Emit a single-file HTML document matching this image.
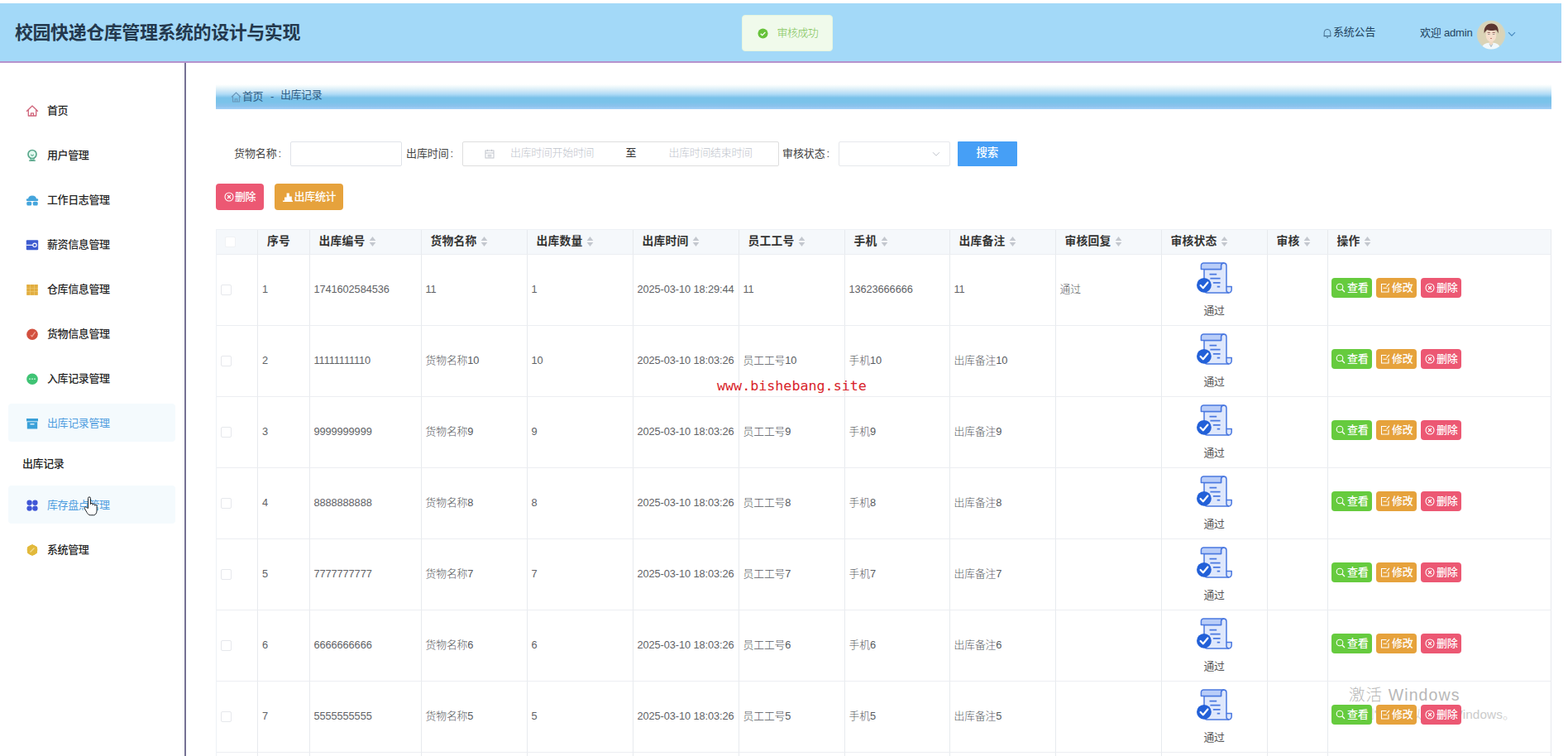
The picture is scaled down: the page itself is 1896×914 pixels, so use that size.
<!DOCTYPE html>
<html lang="zh-CN">
<head>
<meta charset="utf-8">
<title>校园快递仓库管理系统的设计与实现</title>
<style>
*{box-sizing:border-box;margin:0;padding:0}
html,body{width:1896px;height:914px;overflow:hidden;background:#fff}
body{font-family:"Liberation Sans","Noto Sans CJK SC",sans-serif;font-size:12px;color:#333;position:relative}
#hdr{position:absolute;left:0;top:4px;width:1888px;height:72px;background:#a3d9f8;border-bottom:2px solid #b592cd}
#title{position:absolute;left:18px;top:21px;font-size:22px;font-weight:700;color:#23384d;letter-spacing:-0.44px;line-height:30px;white-space:nowrap}
#toast{position:absolute;left:897px;top:14px;width:110px;height:44px;background:#f0faeb;border:1px solid #e6f6df;border-radius:4px}
#toast svg{position:absolute;left:17.500px;top:15px}
#toast span{position:absolute;left:41.500px;top:12px;font-size:13px;color:#7cc253;line-height:18px;letter-spacing:-0.6px;white-space:nowrap;font-weight:300}
.hd-t{position:absolute;font-size:13px;color:#22435f;line-height:18px;white-space:nowrap;letter-spacing:-0.2px}
#side{position:absolute;left:0;top:76px;width:225px;height:838px;border-right:2px solid #757194;background:#fff}
.mi{position:absolute;left:10px;width:202px;height:46px;border-radius:4px}
.mi.act{background:#f4fafd}
.mi svg{position:absolute;left:21px;top:15.500px;width:16px;height:16px}
.mi span{position:absolute;left:47px;top:14px;font-size:13px;font-weight:500;color:#262626;line-height:20px;white-space:nowrap;letter-spacing:-0.4px}
.mi.act span{color:#4f9ddf;font-weight:400}
#sub{position:absolute;left:27px;top:475px;font-size:13px;font-weight:500;color:#222;line-height:20px;letter-spacing:-0.4px;white-space:nowrap}
#bc{position:absolute;left:261px;top:102px;width:1615px;height:30px;background:linear-gradient(180deg,#ffffff 0%,#eef8fb 10%,#d3eaf7 24%,#aedaf6 40%,#7ac2ea 54%,#7ac3ea 72%,#8cc2ec 88%,#a3d1f8 100%)}
#bc span{position:absolute;top:6px;font-size:13px;color:#2f5e86;line-height:18px;white-space:nowrap;letter-spacing:-0.45px}
.lbl{position:absolute;top:177px;font-size:13px;color:#444;line-height:18px;white-space:nowrap;letter-spacing:-0.1px}
.lbl i{font-style:normal;margin-left:2px}
.inp{position:absolute;top:171px;height:30px;border:1px solid #e0e3e9;background:#fff;border-radius:2px}
.ph{position:absolute;top:4px;font-size:13px;color:#c0c4cc;line-height:18px;white-space:nowrap;letter-spacing:-0.35px;font-weight:300}
.btn{position:absolute;border-radius:4px;color:#fff;font-size:12.5px;line-height:18px;white-space:nowrap}
.btn span{position:absolute;white-space:nowrap;font-weight:500}
.btn svg{position:absolute}
#tbl{position:absolute;left:261px;top:277px;width:1614px;border-collapse:separate;border-spacing:0;table-layout:fixed;border-top:1px solid #eef1f6;border-left:1px solid #eef1f6}
#tbl th,#tbl td{border-right:1px solid #e7eaee;border-bottom:1px solid #eceef2;text-align:left;vertical-align:middle;overflow:hidden;white-space:nowrap;position:relative}
#tbl th{height:30px;background:#f5f8fb;font-size:13.8px;font-weight:700;color:#333;padding:0 0 6px 11px;letter-spacing:0.2px}
#tbl td{height:86px;font-size:12.8px;color:#606266;padding:0 0 2px 5px;letter-spacing:-0.1px;font-weight:300}
#tbl td.c{padding-bottom:4px;color:#565a60}
.cb{display:block;width:13px;height:13px;border:1px solid #e6e8ec;border-radius:2px;background:#fff;position:relative}
.srt{display:inline-block;vertical-align:middle;margin-left:4px;margin-top:0px}
.st{position:absolute;left:0;top:0;width:100%;height:100%}
.st svg{position:absolute;left:42.6px;top:9px}
.st span{position:absolute;left:0;width:100%;text-align:center;top:59px;font-size:12.8px;line-height:18px;color:#555;font-weight:400;letter-spacing:-0.3px}
.ob{position:absolute;top:28px;height:24px;border-radius:4px;color:#fff;font-size:13px;font-weight:500}
.ob svg{position:absolute;left:5px;top:6px}
.ob span{position:absolute;left:19.500px;top:3px;line-height:18px;letter-spacing:-0.2px}
#wm{position:absolute;left:867px;top:455px;font-family:"DejaVu Sans Mono","Liberation Mono",monospace;font-size:16.700px;color:#d8242a;line-height:22px;white-space:nowrap;letter-spacing:0}
#aw1{position:absolute;left:1631px;top:827px;font-size:19.500px;letter-spacing:1.100px;color:#b8b8b8;line-height:26px;white-space:nowrap;font-family:"Liberation Sans","Noto Sans CJK SC",sans-serif;font-weight:300}
#aw2{position:absolute;left:1631px;top:854px;font-size:15.300px;letter-spacing:0.1px;color:#cbcbcb;line-height:20px;white-space:nowrap;font-weight:300}
</style>
</head>
<body>
<div id="hdr">
<div id="title">校园快递仓库管理系统的设计与实现</div>
<div id="toast"><svg width="13" height="13" viewBox="0 0 14 14"><circle cx="7" cy="7" r="6.500" fill="#67c23a"/><path d="M4 7.200l2.200 2.100 3.900-4.100" stroke="#fff" stroke-width="1.400" fill="none"/></svg><span>审核成功</span></div>
<svg style="position:absolute;left:1599.500px;top:29.500px" width="10" height="12" viewBox="0 0 10 12"><path d="M1.200 9.500V5.200a3.800 3.800 0 0 1 7.600 0v4.300z" fill="none" stroke="#3d6485" stroke-width="0.900"/><path d="M0.500 9.700h9M4 11.300h2" stroke="#3d6485" stroke-width="0.900"/></svg>
<div class="hd-t" style="left:1612px;top:26px">系统公告</div>
<div class="hd-t" style="left:1717px;top:27px">欢迎 admin</div>
<svg style="position:absolute;left:1785px;top:19.500px" width="36" height="36" viewBox="0 0 36 36">
<defs><clipPath id="av"><circle cx="18" cy="18" r="17.500"/></clipPath><radialGradient id="avg" cx="50%" cy="50%" r="50%"><stop offset="0.82" stop-color="#dbd3b6"/><stop offset="1" stop-color="#cfd6c4"/></radialGradient></defs>
<circle cx="18" cy="18" r="17.300" fill="url(#avg)"/>
<g clip-path="url(#av)">
<path d="M6 38c0-7 4-10.500 12-10.500s11.500 3.500 11.500 10.500z" fill="#f1f8fb"/>
<path d="M15.800 25.500h4.400v3.800l-2.200 2-2.200-2z" fill="#f0d9c3"/>
<path d="M16.300 29.500l1.700 3 1.700-3" fill="none" stroke="#9fb4bf" stroke-width="0.900"/>
<ellipse cx="18" cy="18.500" rx="6.300" ry="8" fill="#f6dfcd"/>
<path d="M9.800 16.500c-1.200-7.500 3.200-12 8.600-12s9.500 4 8.100 12c-.6-2-1.300-3.300-2.400-4.200-3 1.200-8.200 1-10.900-.2-1.600 1.200-2.600 2.400-3.400 4.400z" fill="#5b3530"/>
<path d="M13.600 15.300h3.200M19.600 15.300h3.200" stroke="#6b3a35" stroke-width="0.800"/>
<path d="M14 17.500h2.600M19.800 17.500h2.600" stroke="#8a8580" stroke-width="0.800"/>
<path d="M17 22.300q1 .7 2 0" fill="none" stroke="#b5645a" stroke-width="0.800"/>
</g></svg>
<svg style="position:absolute;left:1823px;top:34px" width="10" height="7" viewBox="0 0 10 7"><path d="M1 1.200l4 4 4-4" fill="none" stroke="#4587bd" stroke-width="1.100"/></svg>
</div>
<div id="side">
<div class="mi" style="top:34px"><svg viewBox="0 0 16 16"><path d="M1.5 8.2L8 2l6.5 6.2M3.3 7v7h9.4V7M6.5 14v-3.2h3V14" fill="none" stroke="#cf6379" stroke-width="1.300" stroke-linejoin="round" stroke-linecap="round"/></svg><span>首页</span></div>
<div class="mi" style="top:88px"><svg viewBox="0 0 16 16"><path d="M5.600 10.800L6.200 13.600H9.800L10.400 10.800z" fill="#b5f0d8" stroke="#5aa88c" stroke-width="1"/><circle cx="8" cy="6.500" r="5" fill="#e2faf0" stroke="#5aa88c" stroke-width="1.700"/><path d="M4.200 14.200h7.600" stroke="#5aa88c" stroke-width="1.500"/><path d="M6.200 6.800l1.800 1.500 1.800-1.500" fill="none" stroke="#5aa88c" stroke-width="1.100"/></svg><span>用户管理</span></div>
<div class="mi" style="top:142px"><svg viewBox="0 0 16 16"><path d="M3 7Q3 2.400 8 2.400T13 7z" fill="#45a5dc"/><rect x="0.800" y="6.300" width="14.400" height="2.600" rx="1.200" fill="#45a5dc"/><rect x="1.300" y="9.700" width="5.900" height="4.800" rx="1.600" fill="#45a5dc"/><rect x="8.800" y="9.700" width="5.900" height="4.800" rx="1.600" fill="#45a5dc"/></svg><span>工作日志管理</span></div>
<div class="mi" style="top:196px"><svg viewBox="0 0 16 16"><rect x="0.8" y="2.2" width="14.4" height="12" rx="1" fill="#3d5bd0"/><path d="M1 8.3h8" stroke="#fff" stroke-width="1.1"/><circle cx="11" cy="8.3" r="2.2" fill="none" stroke="#fff" stroke-width="1.1"/></svg><span>薪资信息管理</span></div>
<div class="mi" style="top:250px"><svg viewBox="0 0 16 16"><rect x="1.300" y="2" width="13.400" height="12.800" fill="#f3d78c"/><g fill="#e2ad3f"><rect x="1.300" y="2.000" width="4.200" height="4"/><rect x="5.900" y="2.000" width="4.200" height="4"/><rect x="10.500" y="2.000" width="4.200" height="4"/><rect x="1.300" y="6.400" width="4.200" height="4"/><rect x="5.900" y="6.400" width="4.200" height="4"/><rect x="10.500" y="6.400" width="4.200" height="4"/><rect x="1.300" y="10.800" width="4.200" height="4"/><rect x="5.900" y="10.800" width="4.200" height="4"/><rect x="10.500" y="10.800" width="4.200" height="4"/></g></svg><span>仓库信息管理</span></div>
<div class="mi" style="top:304px"><svg viewBox="0 0 16 16"><circle cx="8" cy="8.200" r="6.800" fill="#d2503f"/><path d="M6.200 9.200l1.600 1.500 3.800-5.400" fill="none" stroke="#f1a597" stroke-width="1.300"/></svg><span>货物信息管理</span></div>
<div class="mi" style="top:358px"><svg viewBox="0 0 16 16"><circle cx="8" cy="8.2" r="6.8" fill="#3fc374"/><circle cx="5" cy="8.2" r="0.9" fill="#c9f2d9"/><circle cx="8" cy="8.2" r="0.9" fill="#c9f2d9"/><circle cx="11" cy="8.2" r="0.9" fill="#c9f2d9"/></svg><span>入库记录管理</span></div>
<div class="mi act" style="top:412px"><svg viewBox="0 0 16 16"><rect x="1" y="2" width="14" height="3.4" fill="#3aa0d8"/><rect x="1.8" y="6.2" width="12.4" height="8.3" fill="#3aa0d8"/><rect x="5.5" y="8" width="5" height="1.5" fill="#d8eefa"/></svg><span>出库记录管理</span></div>
<div class="mi act" style="top:511px"><svg viewBox="0 0 16 16"><g fill="#3f56d6"><circle cx="4.6" cy="4.8" r="3.2"/><circle cx="11.4" cy="4.8" r="3.2"/><circle cx="4.6" cy="11.6" r="3.2"/><circle cx="11.4" cy="11.6" r="3.2"/></g></svg><span>库存盘点管理</span></div>
<div class="mi" style="top:565px"><svg viewBox="0 0 16 16"><path d="M8 1l6 3.4v7.2L8 15l-6-3.4V4.400z" fill="#e2b93b"/><circle cx="8" cy="8" r="6.3" fill="#e2b93b"/><path d="M5.5 10.500l5-5" stroke="#f4dc8e" stroke-width="1.2"/></svg><span>系统管理</span></div>
<div id="sub">出库记录</div>
<svg style="position:absolute;left:101px;top:524px" width="18" height="24" viewBox="0 0 18 24"><path d="M5.500 14.500V2.400a1.500 1.500 0 0 1 3 0V9.600a1.300 1.300 0 0 1 2.600 0.200V10.400a1.300 1.300 0 0 1 2.600 0.300V11.300a1.200 1.200 0 0 1 2.400 0.300V17c0 3-1.500 5.800-3.600 5.800H8.200c-2 0-3.200-1.600-4.200-3.400L1.200 14.600c-0.700-1.300 1.200-2.400 2.100-1.200Z" fill="#fdfefe" stroke="#20262b" stroke-width="1" stroke-linejoin="round"/></svg>
</div>
<div id="bc"><svg style="position:absolute;left:18px;top:9px" width="13" height="13" viewBox="0 0 12 12"><path d="M0.800 6L6 1l5.200 5M2.300 5v6h7.400V5M4.800 11V8h2.400v3" fill="none" stroke="#6a97ba" stroke-width="1"/></svg><span style="left:32px">首页</span><span style="left:66px">-</span><span style="left:78px;top:4px">出库记录</span></div>
<div class="lbl" style="left:283px">货物名称<i>:</i></div>
<div class="inp" style="left:351px;width:135px"></div>
<div class="lbl" style="left:491px">出库时间<i>:</i></div>
<div class="inp" style="left:559px;width:383px;top:171px;height:30px;border-color:#dedede"><svg style="position:absolute;left:26px;top:8px" width="12" height="12" viewBox="0 0 12 12"><rect x="1" y="2" width="10" height="9" fill="none" stroke="#c0c4cc" stroke-width="1"/><path d="M1 5h10M3.500 7.500h5M3.500 9.200h5M3.500 0.800v2M8.500 0.800v2" stroke="#c0c4cc" stroke-width="1"/></svg><span class="ph" style="left:57px">出库时间开始时间</span><span class="ph" style="left:196.500px;color:#333;font-weight:400">至</span><span class="ph" style="left:248.500px">出库时间结束时间</span></div>
<div class="lbl" style="left:946px">审核状态<i>:</i></div>
<div class="inp" style="left:1014px;width:135px;border-color:#e6e8ec"><svg style="position:absolute;left:112px;top:11px" width="10" height="7" viewBox="0 0 10 7"><path d="M1 1.200l4 4 4-4" fill="none" stroke="#c0c4cc" stroke-width="1"/></svg></div>
<div class="btn" style="left:1158px;top:171px;width:72px;height:30px;background:#469ff6;border-radius:1px"><span style="left:22.500px;top:5px;font-size:13.500px;letter-spacing:-0.3px">搜索</span></div>
<div class="btn" style="left:261px;top:222px;width:58px;height:32px;background:#ec5873"><svg style="left:10px;top:10px" width="12" height="12" viewBox="0 0 12 12"><circle cx="6" cy="6" r="5" fill="none" stroke="#fff" stroke-width="1.100"/><path d="M4 4l4 4M8 4l-4 4" stroke="#fff" stroke-width="1.100"/></svg><span style="left:23px;top:7px;font-size:13px;letter-spacing:-0.4px">删除</span></div>
<div class="btn" style="left:332px;top:222px;width:83px;height:32px;background:#e6a23c"><svg style="left:10px;top:10px" width="12" height="12" viewBox="0 0 12 12"><path d="M0 12h12v-1.600h-1.200V5.500H7.800V1.500H4.600V6.500H2V10.400H0z" fill="#fff"/></svg><span style="left:23.500px;top:7px;font-size:13px;letter-spacing:-0.3px">出库统计</span></div>
<div id="aw2">转到"设置"以激活 Windows。</div>
<table id="tbl"><colgroup><col style="width:50px"><col style="width:62.5px"><col style="width:135px"><col style="width:128px"><col style="width:128px"><col style="width:128px"><col style="width:128px"><col style="width:127px"><col style="width:128px"><col style="width:128px"><col style="width:128px"><col style="width:73px"><col style="width:270px"></colgroup>
<thead><tr><th style="padding-left:10px"><i class="cb" style="top:2.500px;border-color:#f0f2f5"></i></th><th>序号</th><th>出库编号<svg class="srt" width="9" height="14" viewBox="0 0 9 14"><path d="M4.500 1L8.300 6H0.700z" fill="#c3c7ce"/><path d="M4.500 13L8.300 8H0.700z" fill="#c3c7ce"/></svg></th><th>货物名称<svg class="srt" width="9" height="14" viewBox="0 0 9 14"><path d="M4.500 1L8.300 6H0.700z" fill="#c3c7ce"/><path d="M4.500 13L8.300 8H0.700z" fill="#c3c7ce"/></svg></th><th>出库数量<svg class="srt" width="9" height="14" viewBox="0 0 9 14"><path d="M4.500 1L8.300 6H0.700z" fill="#c3c7ce"/><path d="M4.500 13L8.300 8H0.700z" fill="#c3c7ce"/></svg></th><th>出库时间<svg class="srt" width="9" height="14" viewBox="0 0 9 14"><path d="M4.500 1L8.300 6H0.700z" fill="#c3c7ce"/><path d="M4.500 13L8.300 8H0.700z" fill="#c3c7ce"/></svg></th><th>员工工号<svg class="srt" width="9" height="14" viewBox="0 0 9 14"><path d="M4.500 1L8.300 6H0.700z" fill="#c3c7ce"/><path d="M4.500 13L8.300 8H0.700z" fill="#c3c7ce"/></svg></th><th>手机<svg class="srt" width="9" height="14" viewBox="0 0 9 14"><path d="M4.500 1L8.300 6H0.700z" fill="#c3c7ce"/><path d="M4.500 13L8.300 8H0.700z" fill="#c3c7ce"/></svg></th><th>出库备注<svg class="srt" width="9" height="14" viewBox="0 0 9 14"><path d="M4.500 1L8.300 6H0.700z" fill="#c3c7ce"/><path d="M4.500 13L8.300 8H0.700z" fill="#c3c7ce"/></svg></th><th>审核回复<svg class="srt" width="9" height="14" viewBox="0 0 9 14"><path d="M4.500 1L8.300 6H0.700z" fill="#c3c7ce"/><path d="M4.500 13L8.300 8H0.700z" fill="#c3c7ce"/></svg></th><th>审核状态<svg class="srt" width="9" height="14" viewBox="0 0 9 14"><path d="M4.500 1L8.300 6H0.700z" fill="#c3c7ce"/><path d="M4.500 13L8.300 8H0.700z" fill="#c3c7ce"/></svg></th><th>审核<svg class="srt" width="9" height="14" viewBox="0 0 9 14"><path d="M4.500 1L8.300 6H0.700z" fill="#c3c7ce"/><path d="M4.500 13L8.300 8H0.700z" fill="#c3c7ce"/></svg></th><th>操作<svg class="srt" width="9" height="14" viewBox="0 0 9 14"><path d="M4.500 1L8.300 6H0.700z" fill="#c3c7ce"/><path d="M4.500 13L8.300 8H0.700z" fill="#c3c7ce"/></svg></th></tr></thead>
<tbody>
<tr><td style="padding-left:5px"><i class="cb" style="top:1px"></i></td><td>1</td><td>1741602584536</td><td>11</td><td>1</td><td>2025-03-10 18:29:44</td><td>11</td><td>13623666666</td><td>11</td><td class="c">通过</td><td><div class="st"><svg width="44" height="41" viewBox="0 0 44 41">
<path d="M9 8.600H29.500V4.200A3.300 3.300 0 0 1 32.800 0.900A3.300 3.300 0 0 1 36 4.200V29.600H42.200V33.300A3.700 3.700 0 0 1 38.500 37H12.500A3.500 3.500 0 0 1 9 33.500Z" fill="#dfe8fc" stroke="#4a78e0" stroke-width="1.500" stroke-linejoin="round"/>
<path d="M8.400 0.900H32.800A3.300 3.300 0 0 0 29.500 4.200V8.600H5.400V3.900A3 3 0 0 1 8.400 0.900Z" fill="#b9cdf8" stroke="#4a78e0" stroke-width="1.500" stroke-linejoin="round"/>
<path d="M36 29.600V33.200A3.400 3.400 0 0 0 39 36.900" fill="none" stroke="#4a78e0" stroke-width="1.500"/>
<path d="M15.500 14.700H24.200M16.400 19.600H28.600M19.900 24.800H28.600M24.700 29.700H28.200" stroke="#4a78e0" stroke-width="1.700"/>
<circle cx="8.900" cy="27.800" r="8.900" fill="#2260d8"/>
<path d="M4.600 28l3.200 3.300 5.600-6.800" fill="none" stroke="#fff" stroke-width="2.200" stroke-linecap="round" stroke-linejoin="round"/>
</svg><span>通过</span></div></td><td></td><td><div class="ob" style="left:4px;width:49px;background:#66cb3e"><svg width="12" height="12" viewBox="0 0 12 12"><circle cx="5" cy="5" r="3.800" fill="none" stroke="#fff" stroke-width="1.100"/><path d="M7.800 7.800L11 11" stroke="#fff" stroke-width="1.300"/></svg><span>查看</span></div><div class="ob" style="left:58px;width:49px;background:#e6a23c"><svg width="12" height="12" viewBox="0 0 12 12"><path d="M7.500 1.500H1.500v9.500h8.500V5.500" fill="none" stroke="#fff" stroke-width="1.100"/><path d="M3.500 6.300h4.500M11 1L7.600 4.600" fill="none" stroke="#fff" stroke-width="1.100"/></svg><span>修改</span></div><div class="ob" style="left:112px;width:49px;background:#ec5873"><svg width="12" height="12" viewBox="0 0 12 12"><circle cx="6" cy="6" r="5" fill="none" stroke="#fff" stroke-width="1.100"/><path d="M4 4l4 4M8 4l-4 4" stroke="#fff" stroke-width="1.100"/></svg><span>删除</span></div></td></tr>
<tr><td style="padding-left:5px"><i class="cb" style="top:1px"></i></td><td>2</td><td>11111111110</td><td class="c">货物名称10</td><td>10</td><td>2025-03-10 18:03:26</td><td class="c">员工工号10</td><td class="c">手机10</td><td class="c">出库备注10</td><td></td><td><div class="st"><svg width="44" height="41" viewBox="0 0 44 41">
<path d="M9 8.600H29.500V4.200A3.300 3.300 0 0 1 32.800 0.900A3.300 3.300 0 0 1 36 4.200V29.600H42.200V33.300A3.700 3.700 0 0 1 38.500 37H12.500A3.500 3.500 0 0 1 9 33.500Z" fill="#dfe8fc" stroke="#4a78e0" stroke-width="1.500" stroke-linejoin="round"/>
<path d="M8.400 0.900H32.800A3.300 3.300 0 0 0 29.500 4.200V8.600H5.400V3.900A3 3 0 0 1 8.400 0.900Z" fill="#b9cdf8" stroke="#4a78e0" stroke-width="1.500" stroke-linejoin="round"/>
<path d="M36 29.600V33.200A3.400 3.400 0 0 0 39 36.900" fill="none" stroke="#4a78e0" stroke-width="1.500"/>
<path d="M15.500 14.700H24.200M16.400 19.600H28.600M19.900 24.800H28.600M24.700 29.700H28.200" stroke="#4a78e0" stroke-width="1.700"/>
<circle cx="8.900" cy="27.800" r="8.900" fill="#2260d8"/>
<path d="M4.600 28l3.200 3.300 5.600-6.800" fill="none" stroke="#fff" stroke-width="2.200" stroke-linecap="round" stroke-linejoin="round"/>
</svg><span>通过</span></div></td><td></td><td><div class="ob" style="left:4px;width:49px;background:#66cb3e"><svg width="12" height="12" viewBox="0 0 12 12"><circle cx="5" cy="5" r="3.800" fill="none" stroke="#fff" stroke-width="1.100"/><path d="M7.800 7.800L11 11" stroke="#fff" stroke-width="1.300"/></svg><span>查看</span></div><div class="ob" style="left:58px;width:49px;background:#e6a23c"><svg width="12" height="12" viewBox="0 0 12 12"><path d="M7.500 1.500H1.500v9.500h8.500V5.500" fill="none" stroke="#fff" stroke-width="1.100"/><path d="M3.500 6.300h4.500M11 1L7.600 4.600" fill="none" stroke="#fff" stroke-width="1.100"/></svg><span>修改</span></div><div class="ob" style="left:112px;width:49px;background:#ec5873"><svg width="12" height="12" viewBox="0 0 12 12"><circle cx="6" cy="6" r="5" fill="none" stroke="#fff" stroke-width="1.100"/><path d="M4 4l4 4M8 4l-4 4" stroke="#fff" stroke-width="1.100"/></svg><span>删除</span></div></td></tr>
<tr><td style="padding-left:5px"><i class="cb" style="top:1px"></i></td><td>3</td><td>9999999999</td><td class="c">货物名称9</td><td>9</td><td>2025-03-10 18:03:26</td><td class="c">员工工号9</td><td class="c">手机9</td><td class="c">出库备注9</td><td></td><td><div class="st"><svg width="44" height="41" viewBox="0 0 44 41">
<path d="M9 8.600H29.500V4.200A3.300 3.300 0 0 1 32.800 0.900A3.300 3.300 0 0 1 36 4.200V29.600H42.200V33.300A3.700 3.700 0 0 1 38.500 37H12.500A3.500 3.500 0 0 1 9 33.500Z" fill="#dfe8fc" stroke="#4a78e0" stroke-width="1.500" stroke-linejoin="round"/>
<path d="M8.400 0.900H32.800A3.300 3.300 0 0 0 29.500 4.200V8.600H5.400V3.900A3 3 0 0 1 8.400 0.900Z" fill="#b9cdf8" stroke="#4a78e0" stroke-width="1.500" stroke-linejoin="round"/>
<path d="M36 29.600V33.200A3.400 3.400 0 0 0 39 36.900" fill="none" stroke="#4a78e0" stroke-width="1.500"/>
<path d="M15.500 14.700H24.200M16.400 19.600H28.600M19.900 24.800H28.600M24.700 29.700H28.200" stroke="#4a78e0" stroke-width="1.700"/>
<circle cx="8.900" cy="27.800" r="8.900" fill="#2260d8"/>
<path d="M4.600 28l3.200 3.300 5.600-6.800" fill="none" stroke="#fff" stroke-width="2.200" stroke-linecap="round" stroke-linejoin="round"/>
</svg><span>通过</span></div></td><td></td><td><div class="ob" style="left:4px;width:49px;background:#66cb3e"><svg width="12" height="12" viewBox="0 0 12 12"><circle cx="5" cy="5" r="3.800" fill="none" stroke="#fff" stroke-width="1.100"/><path d="M7.800 7.800L11 11" stroke="#fff" stroke-width="1.300"/></svg><span>查看</span></div><div class="ob" style="left:58px;width:49px;background:#e6a23c"><svg width="12" height="12" viewBox="0 0 12 12"><path d="M7.500 1.500H1.500v9.500h8.500V5.500" fill="none" stroke="#fff" stroke-width="1.100"/><path d="M3.500 6.300h4.500M11 1L7.600 4.600" fill="none" stroke="#fff" stroke-width="1.100"/></svg><span>修改</span></div><div class="ob" style="left:112px;width:49px;background:#ec5873"><svg width="12" height="12" viewBox="0 0 12 12"><circle cx="6" cy="6" r="5" fill="none" stroke="#fff" stroke-width="1.100"/><path d="M4 4l4 4M8 4l-4 4" stroke="#fff" stroke-width="1.100"/></svg><span>删除</span></div></td></tr>
<tr><td style="padding-left:5px"><i class="cb" style="top:1px"></i></td><td>4</td><td>8888888888</td><td class="c">货物名称8</td><td>8</td><td>2025-03-10 18:03:26</td><td class="c">员工工号8</td><td class="c">手机8</td><td class="c">出库备注8</td><td></td><td><div class="st"><svg width="44" height="41" viewBox="0 0 44 41">
<path d="M9 8.600H29.500V4.200A3.300 3.300 0 0 1 32.800 0.900A3.300 3.300 0 0 1 36 4.200V29.600H42.200V33.300A3.700 3.700 0 0 1 38.500 37H12.500A3.500 3.500 0 0 1 9 33.500Z" fill="#dfe8fc" stroke="#4a78e0" stroke-width="1.500" stroke-linejoin="round"/>
<path d="M8.400 0.900H32.800A3.300 3.300 0 0 0 29.500 4.200V8.600H5.400V3.900A3 3 0 0 1 8.400 0.900Z" fill="#b9cdf8" stroke="#4a78e0" stroke-width="1.500" stroke-linejoin="round"/>
<path d="M36 29.600V33.200A3.400 3.400 0 0 0 39 36.900" fill="none" stroke="#4a78e0" stroke-width="1.500"/>
<path d="M15.500 14.700H24.200M16.400 19.600H28.600M19.900 24.800H28.600M24.700 29.700H28.200" stroke="#4a78e0" stroke-width="1.700"/>
<circle cx="8.900" cy="27.800" r="8.900" fill="#2260d8"/>
<path d="M4.600 28l3.200 3.300 5.600-6.800" fill="none" stroke="#fff" stroke-width="2.200" stroke-linecap="round" stroke-linejoin="round"/>
</svg><span>通过</span></div></td><td></td><td><div class="ob" style="left:4px;width:49px;background:#66cb3e"><svg width="12" height="12" viewBox="0 0 12 12"><circle cx="5" cy="5" r="3.800" fill="none" stroke="#fff" stroke-width="1.100"/><path d="M7.800 7.800L11 11" stroke="#fff" stroke-width="1.300"/></svg><span>查看</span></div><div class="ob" style="left:58px;width:49px;background:#e6a23c"><svg width="12" height="12" viewBox="0 0 12 12"><path d="M7.500 1.500H1.500v9.500h8.500V5.500" fill="none" stroke="#fff" stroke-width="1.100"/><path d="M3.500 6.300h4.500M11 1L7.600 4.600" fill="none" stroke="#fff" stroke-width="1.100"/></svg><span>修改</span></div><div class="ob" style="left:112px;width:49px;background:#ec5873"><svg width="12" height="12" viewBox="0 0 12 12"><circle cx="6" cy="6" r="5" fill="none" stroke="#fff" stroke-width="1.100"/><path d="M4 4l4 4M8 4l-4 4" stroke="#fff" stroke-width="1.100"/></svg><span>删除</span></div></td></tr>
<tr><td style="padding-left:5px"><i class="cb" style="top:1px"></i></td><td>5</td><td>7777777777</td><td class="c">货物名称7</td><td>7</td><td>2025-03-10 18:03:26</td><td class="c">员工工号7</td><td class="c">手机7</td><td class="c">出库备注7</td><td></td><td><div class="st"><svg width="44" height="41" viewBox="0 0 44 41">
<path d="M9 8.600H29.500V4.200A3.300 3.300 0 0 1 32.800 0.900A3.300 3.300 0 0 1 36 4.200V29.600H42.200V33.300A3.700 3.700 0 0 1 38.500 37H12.500A3.500 3.500 0 0 1 9 33.500Z" fill="#dfe8fc" stroke="#4a78e0" stroke-width="1.500" stroke-linejoin="round"/>
<path d="M8.400 0.900H32.800A3.300 3.300 0 0 0 29.500 4.200V8.600H5.400V3.900A3 3 0 0 1 8.400 0.900Z" fill="#b9cdf8" stroke="#4a78e0" stroke-width="1.500" stroke-linejoin="round"/>
<path d="M36 29.600V33.200A3.400 3.400 0 0 0 39 36.900" fill="none" stroke="#4a78e0" stroke-width="1.500"/>
<path d="M15.500 14.700H24.200M16.400 19.600H28.600M19.900 24.800H28.600M24.700 29.700H28.200" stroke="#4a78e0" stroke-width="1.700"/>
<circle cx="8.900" cy="27.800" r="8.900" fill="#2260d8"/>
<path d="M4.600 28l3.200 3.300 5.600-6.800" fill="none" stroke="#fff" stroke-width="2.200" stroke-linecap="round" stroke-linejoin="round"/>
</svg><span>通过</span></div></td><td></td><td><div class="ob" style="left:4px;width:49px;background:#66cb3e"><svg width="12" height="12" viewBox="0 0 12 12"><circle cx="5" cy="5" r="3.800" fill="none" stroke="#fff" stroke-width="1.100"/><path d="M7.800 7.800L11 11" stroke="#fff" stroke-width="1.300"/></svg><span>查看</span></div><div class="ob" style="left:58px;width:49px;background:#e6a23c"><svg width="12" height="12" viewBox="0 0 12 12"><path d="M7.500 1.500H1.500v9.500h8.500V5.500" fill="none" stroke="#fff" stroke-width="1.100"/><path d="M3.500 6.300h4.500M11 1L7.600 4.600" fill="none" stroke="#fff" stroke-width="1.100"/></svg><span>修改</span></div><div class="ob" style="left:112px;width:49px;background:#ec5873"><svg width="12" height="12" viewBox="0 0 12 12"><circle cx="6" cy="6" r="5" fill="none" stroke="#fff" stroke-width="1.100"/><path d="M4 4l4 4M8 4l-4 4" stroke="#fff" stroke-width="1.100"/></svg><span>删除</span></div></td></tr>
<tr><td style="padding-left:5px"><i class="cb" style="top:1px"></i></td><td>6</td><td>6666666666</td><td class="c">货物名称6</td><td>6</td><td>2025-03-10 18:03:26</td><td class="c">员工工号6</td><td class="c">手机6</td><td class="c">出库备注6</td><td></td><td><div class="st"><svg width="44" height="41" viewBox="0 0 44 41">
<path d="M9 8.600H29.500V4.200A3.300 3.300 0 0 1 32.800 0.900A3.300 3.300 0 0 1 36 4.200V29.600H42.200V33.300A3.700 3.700 0 0 1 38.500 37H12.500A3.500 3.500 0 0 1 9 33.500Z" fill="#dfe8fc" stroke="#4a78e0" stroke-width="1.500" stroke-linejoin="round"/>
<path d="M8.400 0.900H32.800A3.300 3.300 0 0 0 29.500 4.200V8.600H5.400V3.900A3 3 0 0 1 8.400 0.900Z" fill="#b9cdf8" stroke="#4a78e0" stroke-width="1.500" stroke-linejoin="round"/>
<path d="M36 29.600V33.200A3.400 3.400 0 0 0 39 36.900" fill="none" stroke="#4a78e0" stroke-width="1.500"/>
<path d="M15.500 14.700H24.200M16.400 19.600H28.600M19.900 24.800H28.600M24.700 29.700H28.200" stroke="#4a78e0" stroke-width="1.700"/>
<circle cx="8.900" cy="27.800" r="8.900" fill="#2260d8"/>
<path d="M4.600 28l3.200 3.300 5.600-6.800" fill="none" stroke="#fff" stroke-width="2.200" stroke-linecap="round" stroke-linejoin="round"/>
</svg><span>通过</span></div></td><td></td><td><div class="ob" style="left:4px;width:49px;background:#66cb3e"><svg width="12" height="12" viewBox="0 0 12 12"><circle cx="5" cy="5" r="3.800" fill="none" stroke="#fff" stroke-width="1.100"/><path d="M7.800 7.800L11 11" stroke="#fff" stroke-width="1.300"/></svg><span>查看</span></div><div class="ob" style="left:58px;width:49px;background:#e6a23c"><svg width="12" height="12" viewBox="0 0 12 12"><path d="M7.500 1.500H1.500v9.500h8.500V5.500" fill="none" stroke="#fff" stroke-width="1.100"/><path d="M3.500 6.300h4.500M11 1L7.600 4.600" fill="none" stroke="#fff" stroke-width="1.100"/></svg><span>修改</span></div><div class="ob" style="left:112px;width:49px;background:#ec5873"><svg width="12" height="12" viewBox="0 0 12 12"><circle cx="6" cy="6" r="5" fill="none" stroke="#fff" stroke-width="1.100"/><path d="M4 4l4 4M8 4l-4 4" stroke="#fff" stroke-width="1.100"/></svg><span>删除</span></div></td></tr>
<tr><td style="padding-left:5px"><i class="cb" style="top:1px"></i></td><td>7</td><td>5555555555</td><td class="c">货物名称5</td><td>5</td><td>2025-03-10 18:03:26</td><td class="c">员工工号5</td><td class="c">手机5</td><td class="c">出库备注5</td><td></td><td><div class="st"><svg width="44" height="41" viewBox="0 0 44 41">
<path d="M9 8.600H29.500V4.200A3.300 3.300 0 0 1 32.800 0.900A3.300 3.300 0 0 1 36 4.200V29.600H42.200V33.300A3.700 3.700 0 0 1 38.500 37H12.500A3.500 3.500 0 0 1 9 33.500Z" fill="#dfe8fc" stroke="#4a78e0" stroke-width="1.500" stroke-linejoin="round"/>
<path d="M8.400 0.900H32.800A3.300 3.300 0 0 0 29.500 4.200V8.600H5.400V3.900A3 3 0 0 1 8.400 0.900Z" fill="#b9cdf8" stroke="#4a78e0" stroke-width="1.500" stroke-linejoin="round"/>
<path d="M36 29.600V33.200A3.400 3.400 0 0 0 39 36.900" fill="none" stroke="#4a78e0" stroke-width="1.500"/>
<path d="M15.500 14.700H24.200M16.400 19.600H28.600M19.900 24.800H28.600M24.700 29.700H28.200" stroke="#4a78e0" stroke-width="1.700"/>
<circle cx="8.900" cy="27.800" r="8.900" fill="#2260d8"/>
<path d="M4.600 28l3.200 3.300 5.600-6.800" fill="none" stroke="#fff" stroke-width="2.200" stroke-linecap="round" stroke-linejoin="round"/>
</svg><span>通过</span></div></td><td></td><td><div class="ob" style="left:4px;width:49px;background:#66cb3e"><svg width="12" height="12" viewBox="0 0 12 12"><circle cx="5" cy="5" r="3.800" fill="none" stroke="#fff" stroke-width="1.100"/><path d="M7.800 7.800L11 11" stroke="#fff" stroke-width="1.300"/></svg><span>查看</span></div><div class="ob" style="left:58px;width:49px;background:#e6a23c"><svg width="12" height="12" viewBox="0 0 12 12"><path d="M7.500 1.500H1.500v9.500h8.500V5.500" fill="none" stroke="#fff" stroke-width="1.100"/><path d="M3.500 6.300h4.500M11 1L7.600 4.600" fill="none" stroke="#fff" stroke-width="1.100"/></svg><span>修改</span></div><div class="ob" style="left:112px;width:49px;background:#ec5873"><svg width="12" height="12" viewBox="0 0 12 12"><circle cx="6" cy="6" r="5" fill="none" stroke="#fff" stroke-width="1.100"/><path d="M4 4l4 4M8 4l-4 4" stroke="#fff" stroke-width="1.100"/></svg><span>删除</span></div></td></tr>
<tr><td style="padding-left:5px"><i class="cb" style="top:1px"></i></td><td>8</td><td>4444444444</td><td class="c">货物名称4</td><td>4</td><td>2025-03-10 18:03:26</td><td class="c">员工工号4</td><td class="c">手机4</td><td class="c">出库备注4</td><td></td><td><div class="st"><svg width="44" height="41" viewBox="0 0 44 41">
<path d="M9 8.600H29.500V4.200A3.300 3.300 0 0 1 32.800 0.900A3.300 3.300 0 0 1 36 4.200V29.600H42.200V33.300A3.700 3.700 0 0 1 38.500 37H12.500A3.500 3.500 0 0 1 9 33.500Z" fill="#dfe8fc" stroke="#4a78e0" stroke-width="1.500" stroke-linejoin="round"/>
<path d="M8.400 0.900H32.800A3.300 3.300 0 0 0 29.500 4.200V8.600H5.400V3.900A3 3 0 0 1 8.400 0.900Z" fill="#b9cdf8" stroke="#4a78e0" stroke-width="1.500" stroke-linejoin="round"/>
<path d="M36 29.600V33.200A3.400 3.400 0 0 0 39 36.900" fill="none" stroke="#4a78e0" stroke-width="1.500"/>
<path d="M15.500 14.700H24.200M16.400 19.600H28.600M19.900 24.800H28.600M24.700 29.700H28.200" stroke="#4a78e0" stroke-width="1.700"/>
<circle cx="8.900" cy="27.800" r="8.900" fill="#2260d8"/>
<path d="M4.600 28l3.200 3.300 5.600-6.800" fill="none" stroke="#fff" stroke-width="2.200" stroke-linecap="round" stroke-linejoin="round"/>
</svg><span>通过</span></div></td><td></td><td><div class="ob" style="left:4px;width:49px;background:#66cb3e"><svg width="12" height="12" viewBox="0 0 12 12"><circle cx="5" cy="5" r="3.800" fill="none" stroke="#fff" stroke-width="1.100"/><path d="M7.800 7.800L11 11" stroke="#fff" stroke-width="1.300"/></svg><span>查看</span></div><div class="ob" style="left:58px;width:49px;background:#e6a23c"><svg width="12" height="12" viewBox="0 0 12 12"><path d="M7.500 1.500H1.500v9.500h8.500V5.500" fill="none" stroke="#fff" stroke-width="1.100"/><path d="M3.500 6.300h4.500M11 1L7.600 4.600" fill="none" stroke="#fff" stroke-width="1.100"/></svg><span>修改</span></div><div class="ob" style="left:112px;width:49px;background:#ec5873"><svg width="12" height="12" viewBox="0 0 12 12"><circle cx="6" cy="6" r="5" fill="none" stroke="#fff" stroke-width="1.100"/><path d="M4 4l4 4M8 4l-4 4" stroke="#fff" stroke-width="1.100"/></svg><span>删除</span></div></td></tr>
</tbody></table>
<div id="wm">www.bishebang.site</div>
<div id="aw1">激活 Windows</div>
</body>
</html>
